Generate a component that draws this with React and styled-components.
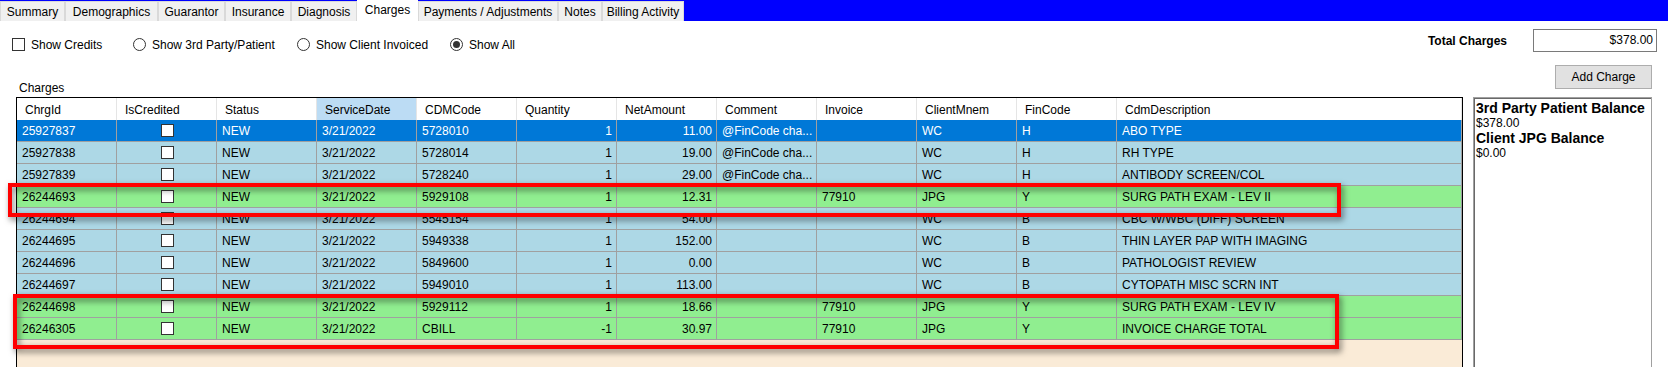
import styled, { createGlobalStyle } from 'styled-components';

const GlobalStyle = createGlobalStyle`
    html, body, #root {
        margin: 0;
        padding: 0;
        height: 100%;
    }
    body {
        background: #ffffff;
        font-family: "Liberation Sans", Arial, sans-serif;
        font-size: 12px;
        color: #000;
        overflow: hidden;
    }
`

const Page = styled.div`
    display: flex;
    flex-direction: column;
    height: 100%;
`
const TabStrip = styled.div`
    display: flex;
    align-items: flex-end;
    height: 21px;
    background: #0000ff;
`
const Tab = styled.div`
    box-sizing: border-box;
    width: ${p => p.w}px;
    height: ${p => p.active ? 21 : 20}px;
    padding-top: ${p => p.active ? 1 : 2}px;
    text-align: center;
    background: ${p => p.active ? '#ffffff' : '#f0f0f0'};
    border: 1px solid ${p => p.active ? '#ffffff' : '#d9d9d9'};
    border-bottom: none;
    font-size: 12px;
    line-height: 16px;
    white-space: nowrap;
`
const TopRow = styled.div`
    box-sizing: border-box;
    display: flex;
    justify-content: space-between;
    align-items: flex-start;
    height: 36px;
    padding: 8px 11px 0 12px;
`
const Options = styled.div`
    display: flex;
    align-items: center;
    height: 13px;
    margin-top: 9px;
`
const Option = styled.label`
    display: flex;
    align-items: center;
    gap: 6px;
    width: ${p => p.w ? `${p.w}px` : 'auto'};
    white-space: nowrap;
`
const CheckBox = styled.span`
    box-sizing: border-box;
    display: inline-block;
    width: 13px;
    height: 13px;
    background: #fff;
    border: 1px solid #333;
`
const Radio = styled.span`
    box-sizing: border-box;
    display: inline-flex;
    align-items: center;
    justify-content: center;
    width: 13px;
    height: 13px;
    border-radius: 50%;
    background: #fff;
    border: 1px solid #333;
    &::after {
        content: '';
        width: 7px;
        height: 7px;
        border-radius: 50%;
        background: ${p => p.checked ? '#333' : 'transparent'};
    }
`
const TotalGroup = styled.div`
    display: flex;
    align-items: center;
    gap: 26px;
`
const TotalLabel = styled.span`
    font-weight: bold;
`
const TotalBox = styled.div`
    box-sizing: border-box;
    width: 124px;
    height: 23px;
    padding: 0 3px;
    border: 1px solid #7a7a7a;
    background: #fff;
    text-align: right;
    line-height: 21px;
`
const SecondRow = styled.div`
    box-sizing: border-box;
    display: flex;
    justify-content: space-between;
    height: 40px;
    padding: 0 16px 0 19px;
`
const SectionLabel = styled.span`
    align-self: flex-end;
    line-height: 14px;
    margin-bottom: 2px;
`
const AddButton = styled.button`
    box-sizing: border-box;
    width: 97px;
    height: 24px;
    margin-top: 8px;
    background: #e1e1e1;
    border: 1px solid #adadad;
    font-family: "Liberation Sans", Arial, sans-serif;
    font-size: 12px;
    color: #000;
    padding: 0;
`
const MainRow = styled.div`
    flex: 1;
    display: flex;
    gap: 10px;
    padding: 0 16px;
    min-height: 0;
`
const GridWrap = styled.div`
    position: relative;
    width: 1447px;
    box-sizing: border-box;
    border: 1px solid #000;
    border-bottom: none;
    background: #faebd7;
`
const GridRow = styled.div`
    display: grid;
    grid-template-columns: repeat(11, 100px) 1fr;
    height: ${p => p.header ? 22 : 22}px;
    background: ${p => ({ header: '#ffffff', selected: '#0078d7', blue: '#add8e6', green: '#90ee90' }[p.tone])};
    color: ${p => p.tone === 'selected' ? '#ffffff' : '#000000'};
`
const HeadCell = styled.div`
    box-sizing: border-box;
    padding: 2px 0 0 8px;
    line-height: 20px;
    border-right: 1px solid #e5e5e5;
    background: ${p => p.sorted ? '#bcdcf4' : 'transparent'};
    white-space: nowrap;
`
const Cell = styled.div`
    box-sizing: border-box;
    display: flex;
    align-items: center;
    justify-content: ${p => p.align === 'right' ? 'flex-end' : p.align === 'center' ? 'center' : 'flex-start'};
    padding: 0 4px 0 5px;
    border-right: 1px solid #a0a0a0;
    border-bottom: 1px solid #a0a0a0;
    white-space: nowrap;
    overflow: hidden;
`
const CellBox = styled.span`
    box-sizing: border-box;
    width: 13px;
    height: 13px;
    background: #fff;
    border: 1px solid #333;
`
const Highlight = styled.div`
    position: absolute;
    left: ${p => p.x}px;
    top: ${p => p.y}px;
    width: ${p => p.w}px;
    height: ${p => p.h}px;
    box-sizing: border-box;
    border: 4px solid #ff0000;
    filter: drop-shadow(2px 3px 3px rgba(0, 0, 0, 0.55));
    pointer-events: none;
`
const SidePanel = styled.div`
    box-sizing: border-box;
    width: 179px;
    padding: 2px 0 0 2px;
    border: 1px solid #a0a0a0;
    border-bottom: none;
    box-shadow: inset 1px 1px 0 #696969;
    background: #fff;
`
const BalanceTitle = styled.div`
    font-weight: bold;
    font-size: 14px;
    line-height: 16px;
    white-space: nowrap;
`
const BalanceValue = styled.div`
    font-size: 12px;
    line-height: 14px;
`

const tabs = [
    ['Summary', 65], ['Demographics', 93], ['Guarantor', 67], ['Insurance', 66],
    ['Diagnosis', 66], ['Charges', 61], ['Payments / Adjustments', 140],
    ['Notes', 44], ['Billing Activity', 82],
];

const columns = ['ChrgId', 'IsCredited', 'Status', 'ServiceDate', 'CDMCode', 'Quantity',
    'NetAmount', 'Comment', 'Invoice', 'ClientMnem', 'FinCode', 'CdmDescription'];

const rows = [
    ['selected', '25927837', '5728010', '1', '11.00', '@FinCode cha...', '', 'WC', 'H', 'ABO TYPE'],
    ['blue', '25927838', '5728014', '1', '19.00', '@FinCode cha...', '', 'WC', 'H', 'RH TYPE'],
    ['blue', '25927839', '5728240', '1', '29.00', '@FinCode cha...', '', 'WC', 'H', 'ANTIBODY SCREEN/COL'],
    ['green', '26244693', '5929108', '1', '12.31', '', '77910', 'JPG', 'Y', 'SURG PATH EXAM - LEV II'],
    ['blue', '26244694', '5545154', '1', '54.00', '', '', 'WC', 'B', 'CBC W/WBC (DIFF) SCREEN'],
    ['blue', '26244695', '5949338', '1', '152.00', '', '', 'WC', 'B', 'THIN LAYER PAP WITH IMAGING'],
    ['blue', '26244696', '5849600', '1', '0.00', '', '', 'WC', 'B', 'PATHOLOGIST REVIEW'],
    ['blue', '26244697', '5949010', '1', '113.00', '', '', 'WC', 'B', 'CYTOPATH MISC SCRN INT'],
    ['green', '26244698', '5929112', '1', '18.66', '', '77910', 'JPG', 'Y', 'SURG PATH EXAM - LEV IV'],
    ['green', '26246305', 'CBILL', '-1', '30.97', '', '77910', 'JPG', 'Y', 'INVOICE CHARGE TOTAL'],
];

function App() {
    return (
        <Page>
            <GlobalStyle />
            <TabStrip>
                {tabs.map(([name, w]) => (
                    <Tab key={name} w={w} active={name === 'Charges'}>{name}</Tab>
                ))}
            </TabStrip>

            <TopRow>
                <Options>
                    <Option w={121}><CheckBox />Show Credits</Option>
                    <Option w={164}><Radio />Show 3rd Party/Patient</Option>
                    <Option w={153}><Radio />Show Client Invoiced</Option>
                    <Option><Radio checked />Show All</Option>
                </Options>
                <TotalGroup>
                    <TotalLabel>Total Charges</TotalLabel>
                    <TotalBox>$378.00</TotalBox>
                </TotalGroup>
            </TopRow>

            <SecondRow>
                <SectionLabel>Charges</SectionLabel>
                <AddButton>Add Charge</AddButton>
            </SecondRow>

            <MainRow>
                <GridWrap>
                    <GridRow tone="header">
                        {columns.map(c => (
                            <HeadCell key={c} sorted={c === 'ServiceDate'}>{c}</HeadCell>
                        ))}
                    </GridRow>
                    {rows.map(([tone, id, cdm, qty, amt, comment, invoice, client, fin, desc]) => (
                        <GridRow key={id} tone={tone}>
                            <Cell>{id}</Cell>
                            <Cell align="center"><CellBox /></Cell>
                            <Cell>NEW</Cell>
                            <Cell>3/21/2022</Cell>
                            <Cell>{cdm}</Cell>
                            <Cell align="right">{qty}</Cell>
                            <Cell align="right">{amt}</Cell>
                            <Cell>{comment}</Cell>
                            <Cell>{invoice}</Cell>
                            <Cell>{client}</Cell>
                            <Cell>{fin}</Cell>
                            <Cell>{desc}</Cell>
                        </GridRow>
                    ))}
                    <Highlight x={-9} y={85} w={1333} h={34} />
                    <Highlight x={-4} y={196} w={1326} h={55} />
                </GridWrap>

                <SidePanel>
                    <BalanceTitle>3rd Party Patient Balance</BalanceTitle>
                    <BalanceValue>$378.00</BalanceValue>
                    <BalanceTitle>Client JPG Balance</BalanceTitle>
                    <BalanceValue>$0.00</BalanceValue>
                </SidePanel>
            </MainRow>
        </Page>
    );
}

export default App;
